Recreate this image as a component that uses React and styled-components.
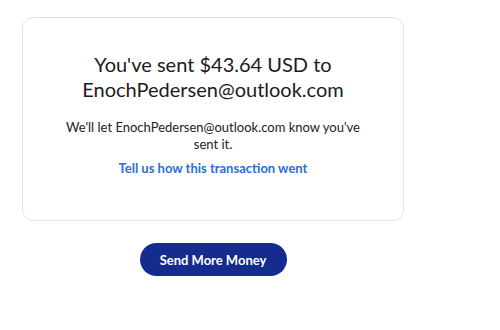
import styled, { createGlobalStyle } from "styled-components";

const GlobalStyle = createGlobalStyle`
  body {
    margin: 0;
    background: #fff;
    font-family: Lato, "Open Sans", sans-serif;
    color: #1a1a1a;
  }
`;

const App = () => {
  const email = "EnochPedersen@outlook.com";
  return (
    <Page>
      <GlobalStyle />
      <Card>
        <Heading>
          You've sent $43.64 USD to
          <br />
          {email}
        </Heading>
        <Note>{`We'll let ${email} know you've sent it.`}</Note>
        <FeedbackLink href="#">Tell us how this transaction went</FeedbackLink>
      </Card>
      <Actions>
        <PrimaryButton type="button">Send More Money</PrimaryButton>
      </Actions>
    </Page>
  );
};

export default App;

const Page = styled.div`
  width: 382px;
  padding: 17px 0 0 22px;
  display: flex;
  flex-direction: column;
`;

const Card = styled.div`
  box-sizing: border-box;
  height: 204px;
  border: 1px solid #e3e3e3;
  border-radius: 11px;
  padding: 34px 40px 0;
  display: flex;
  flex-direction: column;
  align-items: center;
  text-align: center;
`;

const Heading = styled.h1`
  margin: 0;
  font-size: 20px;
  font-weight: 400;
  line-height: 25px;
  color: #1c1c1c;
`;

const Note = styled.p`
  margin: 17px 0 0;
  width: 300px;
  font-size: 13px;
  line-height: 17px;
  color: #222;
`;

const FeedbackLink = styled.a`
  margin-top: 7px;
  font-size: 13px;
  font-weight: 700;
  line-height: 17px;
  color: #2a6fd6;
  text-decoration: none;
`;

const Actions = styled.div`
  display: flex;
  justify-content: center;
  margin-top: 22px;
`;

const PrimaryButton = styled.button`
  width: 147px;
  height: 33px;
  border: 0;
  border-radius: 17px;
  background: #142c8e;
  color: #fff;
  font-family: Lato, "Open Sans", sans-serif;
  font-size: 13px;
  font-weight: 700;
  cursor: pointer;
`;
